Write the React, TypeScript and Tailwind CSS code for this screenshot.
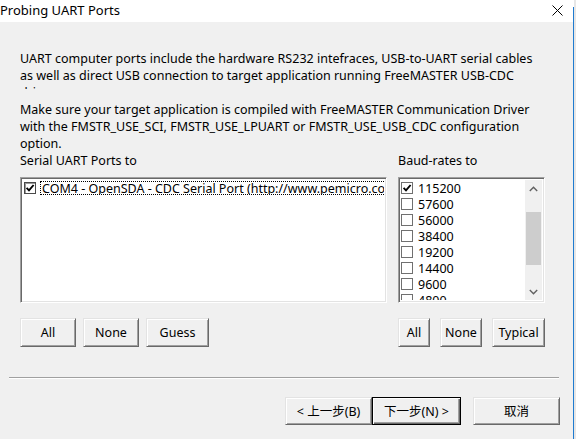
import { ReactNode } from 'react'

const FONT = "font-['Noto_Sans','Noto_Sans_CJK_SC',sans-serif]"

function Check({ checked, heavy = false }: { checked: boolean; heavy?: boolean }) {
  return (
    <span
      className={`flex h-[12px] w-[12px] shrink-0 items-center justify-center bg-white ${
        heavy ? 'border border-[#4a4a4a] shadow-[inset_1px_1px_#9a9a9a]' : 'border border-[#707070]'
      }`}
    >
      {checked ? (
        <svg width="10" height="10" viewBox="0 0 10 10">
          <path d="M1.6 4.8 L4 7.3 L8.6 2" fill="none" stroke="#000" strokeWidth="1.9" />
        </svg>
      ) : null}
    </span>
  )
}

function Btn({ children, w, def = false }: { children: ReactNode; w: string; def?: boolean }) {
  return (
    <button
      type="button"
      className={`${w} flex h-full items-center justify-center bg-[#f0f0f0] text-[12.5px] text-black ${
        def
          ? 'border border-[#000] shadow-[inset_1px_1px_#fff,inset_-1px_-1px_#696969,inset_-2px_-2px_#a0a0a0]'
          : 'border border-t-[#e3e3e3] border-l-[#e3e3e3] border-b-[#696969] border-r-[#696969] shadow-[inset_1px_1px_#fff,inset_-1px_-1px_#a0a0a0]'
      }`}
    >
      {children}
    </button>
  )
}

function Sunken({ children, className }: { children: ReactNode; className: string }) {
  return (
    <div
      className={`${className} border border-t-[#a0a0a0] border-l-[#a0a0a0] border-b-white border-r-white bg-white shadow-[inset_1px_1px_#696969,inset_-1px_-1px_#e3e3e3]`}
    >
      {children}
    </div>
  )
}

const BAUDS = ['115200', '57600', '56000', '38400', '19200', '14400', '9600', '4800']

export default function App() {
  return (
    <div className={`${FONT} flex h-[439px] w-[576px] overflow-hidden bg-white text-black`}>
      <div className="flex w-[573px] flex-col">
        {/* title bar */}
        <div className="flex h-[22px] shrink-0 items-center justify-between bg-white">
          <span className="-mt-[2px] text-[13px] leading-none">Probing UART Ports</span>
          <svg width="11" height="11" viewBox="0 0 11 11" className="-mt-[2px] mr-[10px]">
            <path d="M0.5 0.5 L10.5 10.5 M10.5 0.5 L0.5 10.5" stroke="#000" strokeWidth="1" />
          </svg>
        </div>

        <div className="flex flex-1 flex-col bg-[#f0f0f0] text-[12.5px] leading-[17px]">
          <div className="ml-[20px] mt-[28px] h-[39px] overflow-hidden whitespace-nowrap">
            <div>UART computer ports include the hardware RS232 intefraces, USB-to-UART serial cables</div>
            <div>as well as direct USB connection to target application running FreeMASTER USB-CDC</div>
            <div>driver.</div>
          </div>
          <div className="ml-[20px] mt-[12px] whitespace-nowrap">
            <div>Make sure your target application is compiled with FreeMASTER Communication Driver</div>
            <div>with the FMSTR_USE_SCI, FMSTR_USE_LPUART or FMSTR_USE_USB_CDC configuration</div>
            <div>option.</div>
          </div>

          <div className="ml-[20px] flex">
            <div className="flex w-[367px] flex-col">
              <div className="h-[17px]">Serial UART Ports to</div>
              <Sunken className="mt-[8px] h-[126px] overflow-hidden p-[2px]">
                <div className="flex h-[16px] items-center pl-[1px]">
                  <Check checked heavy />
                  <div className="ml-[4px] flex h-[14px] flex-1 items-center overflow-hidden whitespace-nowrap border border-r-0 border-dotted border-black pl-[1px]">
                    COM4 - OpenSDA - CDC Serial Port (http://www.pemicro.com)
                  </div>
                </div>
              </Sunken>
              <div className="mt-[15px] flex h-[29px] gap-[7px]">
                <Btn w="w-[56px]">All</Btn>
                <Btn w="w-[56px]">None</Btn>
                <Btn w="w-[63px]">Guess</Btn>
              </div>
            </div>

            <div className="ml-[11px] flex w-[147px] flex-col">
              <div className="h-[17px]">Baud-rates to</div>
              <Sunken className="mt-[8px] flex h-[126px] overflow-hidden p-[2px]">
                <div className="flex flex-1 flex-col overflow-hidden">
                  {BAUDS.map((b, i) => (
                    <div key={b} className="flex h-[16px] shrink-0 items-center">
                      <Check checked={i === 0} />
                      <span className="ml-[5px]">{b}</span>
                    </div>
                  ))}
                </div>
                <div className="flex w-[17px] flex-col bg-[#f0f0f0]">
                  <div className="flex h-[17px] items-center justify-center">
                    <svg width="9" height="6" viewBox="0 0 9 6">
                      <path d="M0.8 5 L4.5 1.3 L8.2 5" fill="none" stroke="#606060" strokeWidth="1.4" />
                    </svg>
                  </div>
                  <div className="mx-[1px] mt-[15px] h-[53px] bg-[#cdcdcd]" />
                  <div className="flex-1" />
                  <div className="flex h-[17px] items-center justify-center">
                    <svg width="9" height="6" viewBox="0 0 9 6">
                      <path d="M0.8 1 L4.5 4.7 L8.2 1" fill="none" stroke="#606060" strokeWidth="1.4" />
                    </svg>
                  </div>
                </div>
              </Sunken>
              <div className="mt-[15px] flex h-[29px] gap-[10px]">
                <Btn w="w-[32px]">All</Btn>
                <Btn w="w-[42px]">None</Btn>
                <Btn w="w-[53px]">Typical</Btn>
              </div>
            </div>
          </div>

          <div className="ml-[9px] mt-[30px] w-[550px] border-b border-t border-b-white border-t-[#a0a0a0]" />

          <div className="mt-[18px] flex h-[28px] justify-end pr-[13px]">
            <Btn w="w-[87px]">&lt; 上一步(B)</Btn>
            <Btn w="w-[89px]" def>
              下一步(N) &gt;
            </Btn>
            <div className="ml-[12px] flex">
              <Btn w="w-[87px]">取消</Btn>
            </div>
          </div>
        </div>
      </div>
      <div className="mt-[7px] w-[1px] bg-[#1f7bd0]" />
      <div className="w-[2px] bg-[#e6e6e6]" />
    </div>
  )
}
